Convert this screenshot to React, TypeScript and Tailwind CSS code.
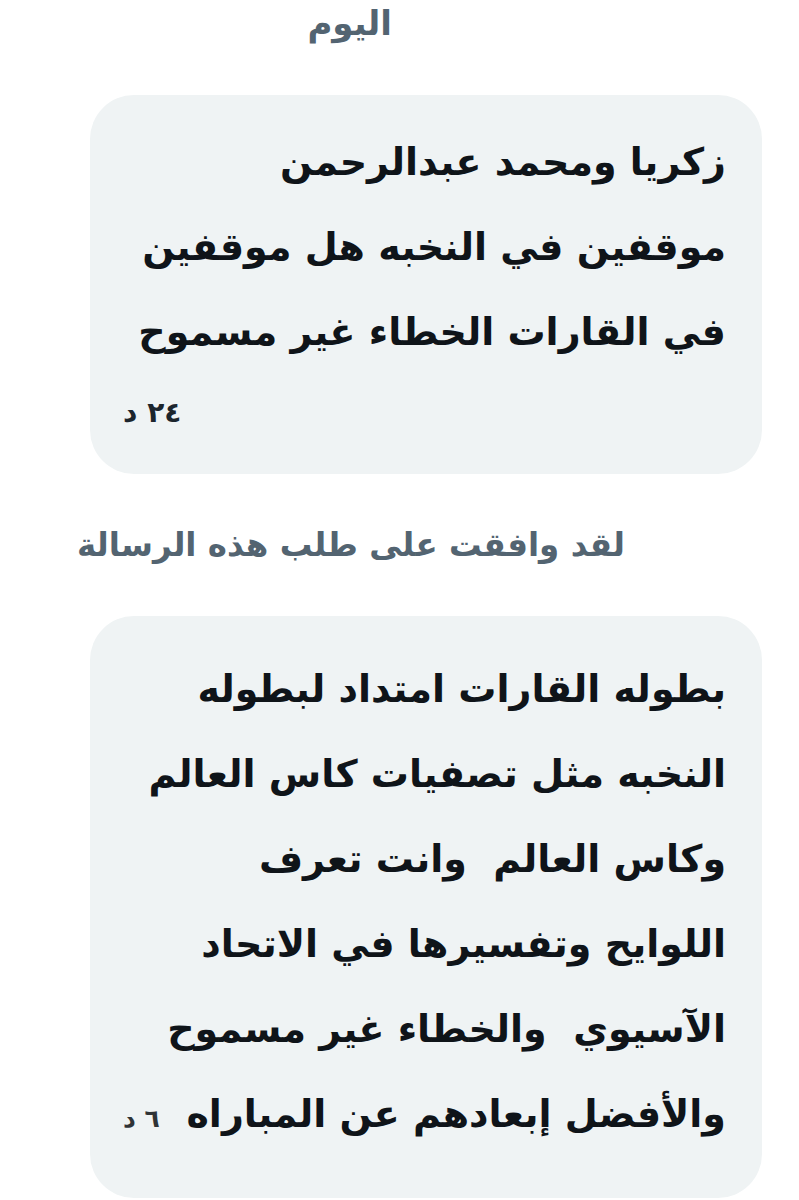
const Bubble = ({ lines, time, inlineTime }: { lines: string[]; time: string; inlineTime?: boolean }) => {
  return (
    <div className={`ml-[90px] mr-[37px] rounded-[44px] bg-[#eff3f4] pr-[36px] pl-[33px] text-[#0f1419] ${inlineTime ? "pt-[31px] pb-[37px]" : "pt-[25px] pb-[23px]"}`}>
      {lines.map((line, i) =>
        inlineTime && i === lines.length - 1 ? (
          <div key={i} className="flex items-baseline justify-between text-[38px] leading-[85px]">
            <span className="whitespace-pre">{line}</span>
            <span className="text-[25px] font-bold text-[#2f3336]">{time}</span>
          </div>
        ) : (
          <div key={i} className="text-[38px] leading-[85px] whitespace-pre">
            {line}
          </div>
        )
      )}
      {!inlineTime && <div className="text-left text-[28px] leading-[76px] text-[#1c252d]">{time}</div>}
    </div>
  );
};

export default function App() {
  return (
    <div dir="rtl" className="w-[799px] h-[1200px] overflow-hidden bg-white font-['DejaVu_Sans',sans-serif] font-bold">
      <div className="pr-[407px] text-[34px] leading-[46px] text-[#536471]">اليوم</div>
      <div className="mt-[49px]">
        <Bubble
          lines={["زكريا ومحمد عبدالرحمن", "موقفين في النخبه هل موقفين", "في القارات الخطاء غير مسموح"]}
          time="٢٤ د"
        />
      </div>
      <div className="mt-[48px] pr-[174px] text-[32.5px] leading-[46px] text-[#536471]">لقد وافقت على طلب هذه الرسالة</div>
      <div className="mt-[48px]">
        <Bubble
          lines={[
            "بطوله القارات امتداد لبطوله",
            "النخبه مثل تصفيات كاس العالم",
            "وكاس العالم  وانت تعرف",
            "اللوايح وتفسيرها في الاتحاد",
            "الآسيوي  والخطاء غير مسموح",
            "والأفضل إبعادهم عن المباراه",
          ]}
          time="٦ د"
          inlineTime
        />
      </div>
    </div>
  );
}
